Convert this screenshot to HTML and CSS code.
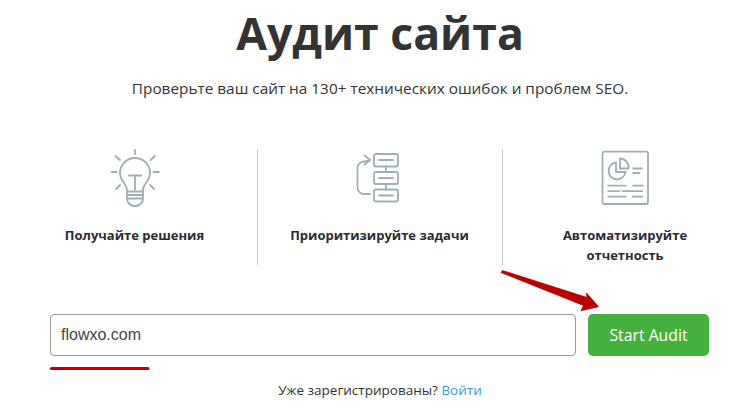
FILE: index.html
```html
<!DOCTYPE html>
<html lang="ru">
<head>
<meta charset="utf-8">
<title>Аудит сайта</title>
<link rel="stylesheet" href="styles.css">
</head>
<body>
<main class="page">
  <h1 class="title">Аудит сайта</h1>
  <p class="subtitle">Проверьте ваш сайт на 130+ технических ошибок и проблем SEO.</p>
  <section class="features">
    <div class="feature">
      <svg class="icon" width="50" height="60" viewBox="0 0 50 60" fill="none" stroke="#9db0b5" stroke-width="1.800" stroke-linecap="round" stroke-linejoin="round">
        <path d="M17 41C17 35 10 32 10 24a15 15 0 0 1 30 0C40 32 33 35 33 41"/>
        <path d="M19 26.500h12.500M25 26.500v14"/>
        <path d="M16.500 42.500h17M16.500 46h17M16.500 49.500h17" stroke-width="2" stroke-linecap="butt"/>
        <path d="M17 42v8a8 7 0 0 0 16 0v-8"/>
        <path d="M25 1v4M1.500 23h5M43.500 23h5.500M5.500 7l4.500 4M45 7l-4.500 4M6 40l4-4M44 40l-4-4"/>
      </svg>
      <h2 class="label">Получайте решения</h2>
    </div>
    <div class="feature">
      <svg class="icon" width="50" height="60" viewBox="0 0 50 60" fill="none" stroke="#9db0b5" stroke-width="1.800" stroke-linecap="round" stroke-linejoin="round">
        <rect x="19" y="5" width="24" height="12.500" rx="2"/>
        <rect x="19" y="23" width="24" height="12" rx="2"/>
        <rect x="19" y="40.500" width="24" height="12" rx="2"/>
        <path d="M24 11h14M24 29h14M24 46.500h14M31 17.500V23M31 35v5.500"/>
        <path d="M15 45H9a6.500 6.500 0 0 1-6.500-6.500V19A6.500 6.500 0 0 1 9 12.500c3 0 4-1 6-1.500"/>
        <path d="M9.500 6.500L15 11l-5.500 4.500"/>
      </svg>
      <h2 class="label">Приоритизируйте задачи</h2>
    </div>
    <div class="feature">
      <svg class="icon" width="48" height="60" viewBox="0 0 48 60" fill="none" stroke="#9db0b5" stroke-width="1.800">
        <rect x="1.500" y="2.700" width="45.500" height="52.300" rx="2"/>
        <path d="M15 13.500a8.500 8.500 0 1 0 9.500 9.500H15z"/>
        <path d="M19 9.500v10h8.500a8.800 8.800 0 0 0-8.500-10z"/>
        <path d="M31.500 19.500h10M31.500 24h7.500M6.500 36.700h19M31.500 36.700h11M6.500 42.200h12.500M20.500 42.200h21.500M6.500 47.700h19M31 47.700h11"/>
      </svg>
      <h2 class="label">Автоматизируйте отчетность</h2>
    </div>
  </section>
  <form class="audit">
    <input class="domain" type="text" value="flowxo.com">
    <button class="start" type="button">Start Audit</button>
  </form>
  <p class="login">Уже зарегистрированы? <a href="#">Войти</a></p>
</main>
<svg class="mark" width="745" height="413" viewBox="0 0 745 413">
  <path d="M501 272.500L502.500 270.500L587 297.500L586.500 293L598.500 306.700L581 310.700L583.500 305.500z" fill="#b80000" stroke="#b80000" stroke-width="0.800" stroke-linejoin="round"/>
  <path d="M51.500 368.500H148" stroke="#c00000" stroke-width="3" stroke-linecap="round"/>
</svg>
</body>
</html>
```
FILE: styles.css
```css
html, body {
  margin: 0;
  height: 413px;
  overflow: hidden;
  background: #fff;
}
body {
  position: relative;
  font-family: "Open Sans", sans-serif;
  color: #333;
}
.page {
  width: 760px;
  box-sizing: border-box;
  display: flex;
  flex-direction: column;
  align-items: center;
}
.title {
  margin: 0;
  font-size: 44.6px;
  line-height: 66px;
  font-weight: 700;
  color: #333;
}
.subtitle {
  margin: 10px 0 0;
  font-size: 15.35px;
  line-height: 24px;
}
.features {
  margin-top: 49px;
  display: grid;
  grid-template-columns: repeat(3, 245px);
  height: 116px;
}
.feature {
  display: flex;
  flex-direction: column;
  align-items: center;
  border-right: 1px solid #ccc;
}
.feature:last-child {
  border-right: 0;
}
.icon {
  display: block;
}
.label {
  margin: 16px 0 0;
  width: 190px;
  text-align: center;
  font-size: 13px;
  line-height: 20px;
  font-weight: 700;
  color: #2b2b33;
}
.audit {
  margin-top: 49px;
  align-self: stretch;
  padding: 0 51px 0 50px;
  display: flex;
  gap: 12px;
}
.domain {
  flex: 1;
  min-width: 0;
  height: 42px;
  box-sizing: border-box;
  padding: 0 10px;
  border: 1px solid #999;
  border-radius: 4px;
  font-family: "Liberation Sans", sans-serif;
  font-size: 16px;
  color: #444;
  outline: 0;
}
.start {
  width: 121px;
  height: 42px;
  border: 0;
  border-radius: 5px;
  background: #46b03f;
  color: #fff;
  font-family: "Open Sans", sans-serif;
  font-size: 15.8px;
}
.login {
  margin: 22px 0 0;
  font-size: 13.5px;
  line-height: 24px;
}
.login a {
  color: #3c99e0;
  text-decoration: none;
}
.mark {
  position: absolute;
  left: 0;
  top: 0;
  pointer-events: none;
}
```
